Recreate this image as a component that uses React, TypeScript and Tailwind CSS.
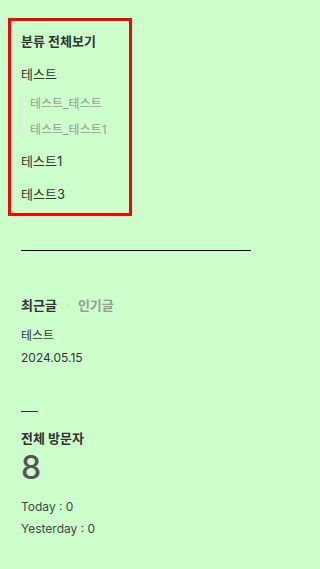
export default function App() {
  return (
    <div className="min-h-screen bg-[#ccffcc] px-[8px] pt-[18px] pb-8 text-[#333] font-['Inter','Noto_Sans_CJK_KR',sans-serif]">
      <div className="w-[124px] border-[3px] border-[#ff0000] pl-[10px] pt-[10px] pb-[9px]">
        <div className="text-[13px] leading-[20px] font-bold text-[#333]">분류 전체보기</div>
        <div className="mt-[13px] text-[13px] leading-[20px] text-[#333]">테스트</div>
        <ul className="mt-[11px] border-l-2 border-[#e6e6e6] pl-[7px] text-[12px] text-[#999]">
          <li className="leading-[18px]">테스트_테스트</li>
          <li className="mt-[8px] leading-[18px]">테스트_테스트1</li>
        </ul>
        <div className="mt-[12px] text-[13px] leading-[20px] text-[#333]">테스트1</div>
        <div className="mt-[13px] text-[13px] leading-[20px] text-[#333]">테스트3</div>
      </div>

      <div className="pl-[13px]">
        <div className="mt-[34px] h-px w-[230px] bg-black" />

        <div className="mt-[44px] flex items-center text-[13px] leading-[20px] font-bold">
          <span className="text-[#333]">최근글</span>
          <span className="mx-[10px] h-[2px] w-px bg-[#c8dcc8]" />
          <span className="text-[#999]">인기글</span>
        </div>
        <div className="mt-[12px] text-[12px] leading-[18px] text-[#333]">테스트</div>
        <div className="mt-[4px] text-[12px] leading-[18px] text-[#333]">2024.05.15</div>

        <div className="mt-[44px] h-px w-[17px] bg-[#333]" />
        <div className="mt-[16px] text-[13px] leading-[20px] font-bold text-[#333]">전체 방문자</div>
        <div className="mt-[2px] text-[32px] leading-[36px] font-medium text-[#555]">8</div>
        <div className="mt-[12px] text-[12px] leading-[18px] text-[#444]">Today : 0</div>
        <div className="mt-[4px] text-[12px] leading-[18px] text-[#444]">Yesterday : 0</div>
      </div>
    </div>
  );
}
